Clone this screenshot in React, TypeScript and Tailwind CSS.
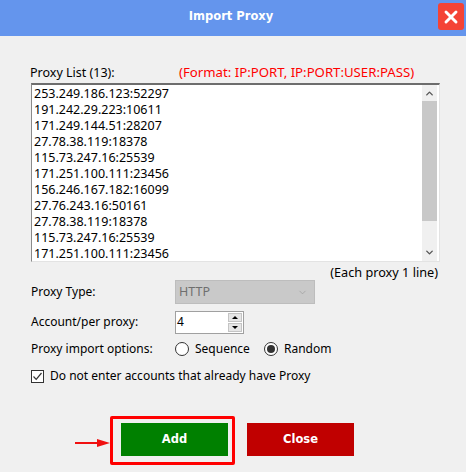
import { ChevronDown, ChevronUp, X } from 'lucide-react';

const proxies = [
  '253.249.186.123:52297',
  '191.242.29.223:10611',
  '171.249.144.51:28207',
  '27.78.38.119:18378',
  '115.73.247.16:25539',
  '171.251.100.111:23456',
  '156.246.167.182:16099',
  '27.76.243.16:50161',
  '27.78.38.119:18378',
  '115.73.247.16:25539',
  '171.251.100.111:23456',
];

export default function App() {
  return (
    <div className="w-[466px] h-[472px] overflow-hidden bg-[#f0f0f0] text-[12px] text-black font-['Noto_Sans',sans-serif]">
      {/* Title bar */}
      <div className="relative h-9 bg-[#6495ed] flex items-center justify-center">
        <span className="font-['DejaVu_Sans',sans-serif] font-bold text-white text-[11.5px] -mt-[2px] mr-[4px]">Import Proxy</span>
        <div className="absolute left-[438px] top-[3px] w-[26px] h-[27px] rounded-[3px] bg-[#f44336] flex items-center justify-center">
          <X className="w-5 h-5 text-white" strokeWidth={3.5} />
        </div>
      </div>

      <div className="pl-[31px] pt-[27px]">
        <div className="flex h-[20px] items-center">
          <span className="w-[148px] text-[12.5px] -ml-[1px] mr-[1px]">Proxy List (13):</span>
          <span className="text-[#ff0000] text-[13.2px]">(Format: IP:PORT, IP:PORT:USER:PASS)</span>
        </div>

        {/* List box */}
        <div className="w-[409px] h-[179px] bg-white border border-[#e3e3e3] border-t-2 border-t-[#6d6d6d] border-l-[#8a8a8a] flex">
          <div className="flex-1 pl-[2px] pt-[1px] leading-[16px] text-[12.5px]">
            {proxies.map((p, i) => (
              <div key={i}>{p}</div>
            ))}
          </div>
          <div className="w-[15px] mr-[2px] bg-[#f0f0f0] flex flex-col items-center">
            <div className="h-[16px] flex items-center justify-center">
              <ChevronUp className="w-[11px] h-[11px] text-[#555]" strokeWidth={3} />
            </div>
            <div className="w-full h-[120px] bg-[#c8c8c8]" />
            <div className="mt-auto h-[17px] flex items-center justify-center">
              <ChevronDown className="w-[11px] h-[11px] text-[#555]" strokeWidth={3} />
            </div>
          </div>
        </div>

        <div className="w-[407px] text-right h-[17px] leading-[17px] mt-[2px] text-[12.7px]">(Each proxy 1 line)</div>

        {/* Form rows */}
        <div className="flex items-center h-[24px] -mt-[1px]">
          <span className="w-[144px]">Proxy Type:</span>
          <div className="w-[140px] h-[24px] bg-[#c9c9c9] border border-[#bdbdbd] flex items-center justify-between pl-[3px] pr-[6px] text-[#6f6f6f] text-[12.5px]">
            <span>HTTP</span>
            <ChevronDown className="w-[11px] h-[11px] text-[#9c9c9c]" strokeWidth={1.5} />
          </div>
        </div>

        <div className="flex items-center h-[23px] mt-[7px]">
          <span className="w-[144px] pb-[2px]">Account/per proxy:</span>
          <div className="w-[69px] h-[23px] bg-white border border-[#a0a0a0] flex items-center justify-between pl-[1px] pr-[1px]">
            <span className="pb-[2px]">4</span>
            <div className="flex flex-col gap-[1px]">
              <div className="w-[14px] h-[9px] bg-[#e6e6e6] border border-[#c4c4c4] flex items-center justify-center">
                <div className="w-0 h-0 border-x-[3px] border-x-transparent border-b-[3px] border-b-black" />
              </div>
              <div className="w-[14px] h-[9px] bg-[#e6e6e6] border border-[#c4c4c4] flex items-center justify-center">
                <div className="w-0 h-0 border-x-[3px] border-x-transparent border-t-[3px] border-t-black" />
              </div>
            </div>
          </div>
        </div>

        <div className="flex items-center h-[20px] mt-[5px]">
          <span className="w-[144px]">Proxy import options:</span>
          <div className="w-[14px] h-[14px] rounded-full border border-[#333] bg-white" />
          <span className="ml-[6px] w-[69px]">Sequence</span>
          <div className="w-[14px] h-[14px] rounded-full border border-[#333] bg-white flex items-center justify-center">
            <div className="w-[8px] h-[8px] rounded-full bg-[#333]" />
          </div>
          <span className="ml-[6px]">Random</span>
        </div>

        <div className="flex items-center h-[20px] mt-[7px]">
          <div className="w-[13px] h-[13px] border border-[#333] bg-white flex items-center justify-center">
            <svg viewBox="0 0 11 11" className="w-[11px] h-[11px]" fill="none" stroke="#333" strokeWidth="1.2">
              <path d="M1.5 5.5 L4.2 8.3 L9.5 2" />
            </svg>
          </div>
          <span className="ml-[6px]">Do not enter accounts that already have Proxy</span>
        </div>

        {/* Buttons */}
        <div className="flex gap-[19px] mt-[37px] ml-[90px]">
          <div className="relative w-[107px] h-[33px] bg-[#008000] flex items-center justify-center font-['DejaVu_Sans',sans-serif] font-bold text-white text-[11.5px]">
            Add
            <div className="absolute -left-[11px] -top-[7px] w-[125px] h-[49px] border-[3px] border-[#ff0000] rounded-[2px]" />
            <svg className="absolute -left-[46px] top-[14px] w-[35px] h-[12px]" viewBox="0 0 35 12">
              <path d="M0 6 H24" stroke="#f01010" strokeWidth="2" />
              <path d="M22 2 L35 6 L22 10 Z" fill="#f01010" />
            </svg>
          </div>
          <div className="w-[107px] h-[33px] bg-[#c00000] flex items-center justify-center font-['DejaVu_Sans',sans-serif] font-bold text-white text-[11.5px]">
            Close
          </div>
        </div>
      </div>
    </div>
  );
}
